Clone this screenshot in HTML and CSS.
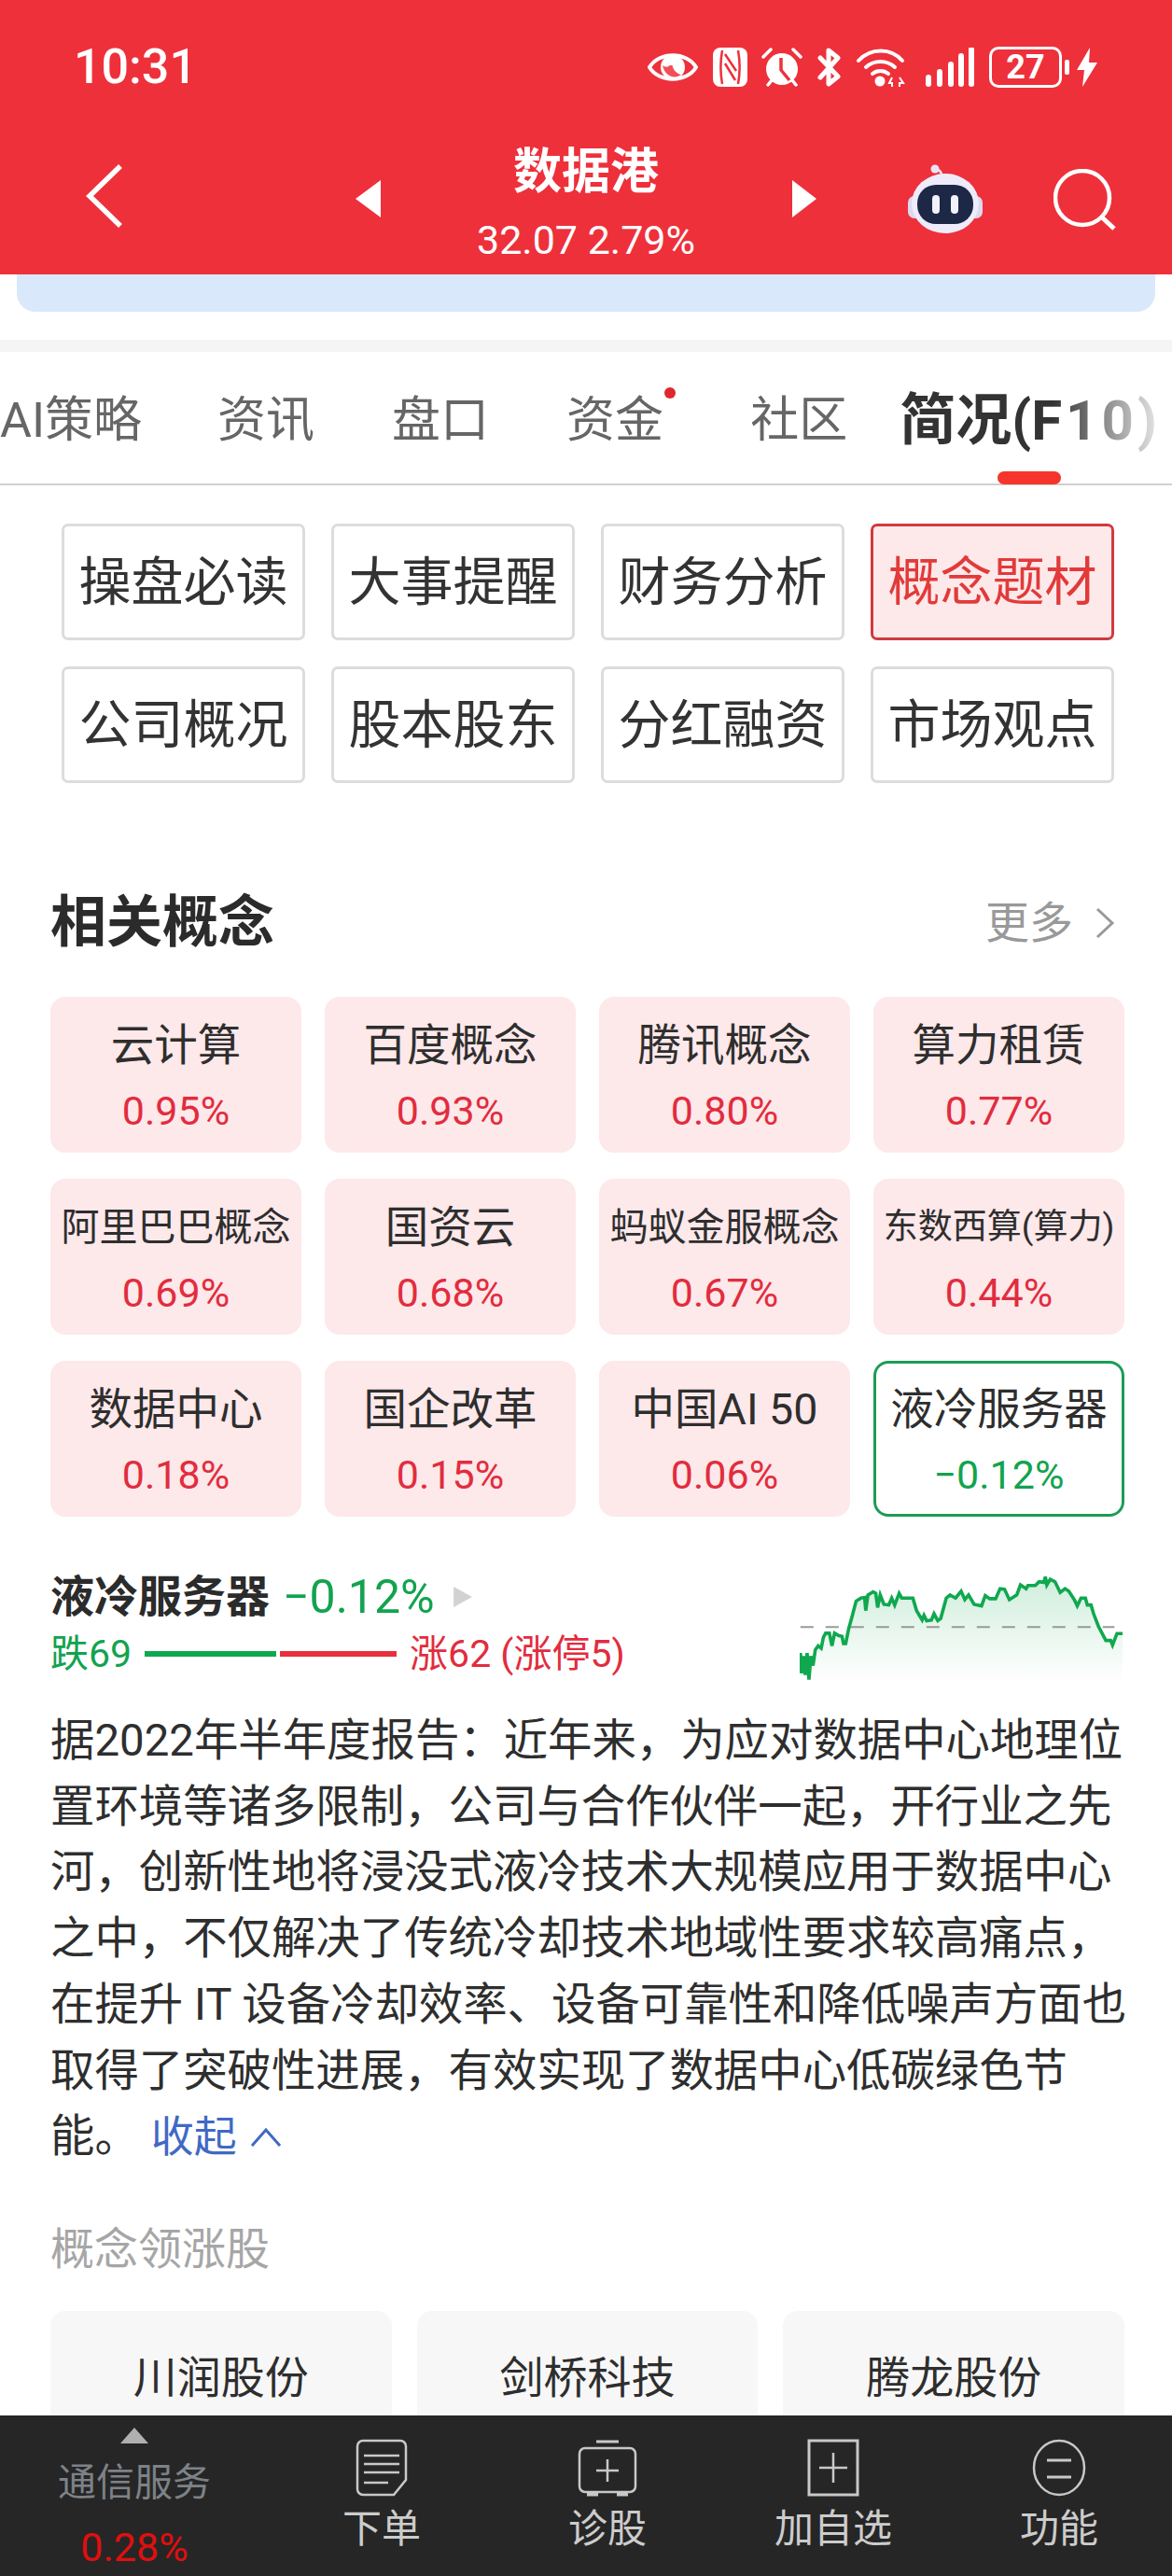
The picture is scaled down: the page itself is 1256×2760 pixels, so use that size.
FILE: index.html
```html
<!DOCTYPE html>
<html lang="zh">
<head>
<meta charset="utf-8">
<title>数据港</title>
<link rel="stylesheet" href="styles.css">
</head>
<body>
<main class="page">
  <header class="appbar">
    <div class="status">
      <span class="time">10:31</span>
      <div class="status-icons">
        <svg class="i-eye" viewBox="0 0 54 42"><path d="M2 21C12 4 42 4 52 21C42 38 12 38 2 21Z" fill="none" stroke="#fff" stroke-width="4"/><circle cx="27" cy="21" r="13" fill="#fff"/><path d="M16 19c4 3 8 2 10-4 0 8 5 13 10 14-6 5-17 3-20-10Z" fill="#ee303b" opacity=".85"/><circle cx="25" cy="16" r="3" fill="#fff"/></svg>
        <svg class="i-nfc" viewBox="0 0 37 42"><rect width="37" height="42" rx="8" fill="#fff"/><path d="M10 3C8 14 8 28 10 39M27 3c2 11 2 25 0 36" stroke="#ee303b" stroke-width="2.5" fill="none"/><path d="M13 7l12 18M13 17l11 18" stroke="#ee303b" stroke-width="2.5" fill="none"/></svg>
        <svg class="i-alarm" viewBox="0 0 44 42"><circle cx="22" cy="23" r="17" fill="#fff"/><path d="M21 11v13l9 11" stroke="#ee303b" stroke-width="3.5" fill="none"/><path d="M2 10 10 2M42 10 34 2M7 40l4-5M37 40l-4-5" stroke="#fff" stroke-width="3.5" stroke-linecap="round"/></svg>
        <svg class="i-bt" viewBox="0 0 27 42"><path d="M4 11 23 31 13 39V3l10 8L4 32" fill="none" stroke="#fff" stroke-width="5" stroke-linejoin="round" stroke-linecap="round"/></svg>
        <svg class="i-wifi" viewBox="0 0 53 42"><path d="M3 14C16 0 38 0 50 14M11 21c9-8 22-8 31 0M18 28c5-4 12-4 17 0" fill="none" stroke="#fff" stroke-width="4" stroke-linecap="round"/><circle cx="26" cy="36" r="5.5" fill="#fff"/><path d="M39 32l-3 6h3v4M47 42v-4l4 0-4-6" fill="none" stroke="#fff" stroke-width="2"/></svg>
        <svg class="i-signal" viewBox="0 0 52 42"><path d="M3 32v7M15 26v13M27 18v21M38 9v30M49 2v37" stroke="#fff" stroke-width="6" stroke-linecap="round"/></svg>
        <span class="battery">27</span>
        <span class="battery-nub"></span>
        <svg class="i-bolt" viewBox="0 0 22 42"><path d="M14 0 0 24h8L6 42l16-26h-9Z" fill="#fff"/></svg>
      </div>
    </div>
    <nav class="nav">
      <svg class="i-back" viewBox="0 0 41 70"><path d="M38 3 5 35l33 32" fill="none" stroke="#fff" stroke-width="5.5"/></svg>
      <svg class="i-prev" viewBox="0 0 27 40"><path d="M27 0v40L0 20Z" fill="#fff"/></svg>
      <div class="stock">
        <div class="stock-name">数据港</div>
        <div class="stock-price">32.07 2.79%</div>
      </div>
      <svg class="i-next" viewBox="0 0 26 40"><path d="M0 0v40l26-20Z" fill="#fff"/></svg>
      <svg class="i-robot" viewBox="0 0 80 74"><path d="M30 5c3 1 6 2 7 9" fill="none" stroke="#e8e4f6" stroke-width="2.5"/><circle cx="29" cy="5" r="4.5" fill="#e8e4f6"/><rect x="0" y="34" width="80" height="24" rx="7" fill="#dcd8f0"/><ellipse cx="40" cy="42" rx="36" ry="32" fill="#eeecfa"/><rect x="10" y="22" width="60" height="42" rx="20" fill="#1c2846"/><rect x="26" y="33" width="8" height="20" rx="4" fill="#f2f2fa"/><rect x="46" y="33" width="8" height="20" rx="4" fill="#f2f2fa"/></svg>
      <svg class="i-search" viewBox="0 0 67 66"><circle cx="31" cy="31" r="29" fill="none" stroke="#fff" stroke-width="4.5"/><path d="M51 51 65 64" stroke="#fff" stroke-width="5"/></svg>
    </nav>
  </header>

  <div class="notice"></div>
  <div class="band"></div>

  <div class="tabs">
    <span class="tab">AI策略</span>
    <span class="tab tab-gap-a">资讯</span>
    <span class="tab tab-gap-b">盘口</span>
    <span class="tab tab-gap-b tab-dot">资金</span>
    <span class="tab tab-gap-c">社区</span>
    <span class="tab tab-active">简况(<span class="tab-latin">F10)</span></span>
  </div>

  <div class="buttons">
    <span class="btn">操盘必读</span>
    <span class="btn">大事提醒</span>
    <span class="btn">财务分析</span>
    <span class="btn btn-on">概念题材</span>
    <span class="btn">公司概况</span>
    <span class="btn">股本股东</span>
    <span class="btn">分红融资</span>
    <span class="btn">市场观点</span>
  </div>

  <section class="concepts">
    <div class="sec-head">
      <h2 class="sec-title">相关概念</h2>
      <span class="sec-more">更多<svg class="i-chev" viewBox="0 0 23 36"><path d="M3 3l16 15L3 33" fill="none" stroke="#999" stroke-width="3"/></svg></span>
    </div>
    <div class="cards">
      <div class="card"><div class="c-name">云计算</div><div class="c-pct">0.95%</div></div>
      <div class="card"><div class="c-name">百度概念</div><div class="c-pct">0.93%</div></div>
      <div class="card"><div class="c-name">腾讯概念</div><div class="c-pct">0.80%</div></div>
      <div class="card"><div class="c-name">算力租赁</div><div class="c-pct">0.77%</div></div>
      <div class="card"><div class="c-name c-sm">阿里巴巴概念</div><div class="c-pct">0.69%</div></div>
      <div class="card"><div class="c-name">国资云</div><div class="c-pct">0.68%</div></div>
      <div class="card"><div class="c-name c-sm">蚂蚁金服概念</div><div class="c-pct">0.67%</div></div>
      <div class="card"><div class="c-name c-xs">东数西算(算力)</div><div class="c-pct">0.44%</div></div>
      <div class="card"><div class="c-name">数据中心</div><div class="c-pct">0.18%</div></div>
      <div class="card"><div class="c-name">国企改革</div><div class="c-pct">0.15%</div></div>
      <div class="card"><div class="c-name">中国AI 50</div><div class="c-pct">0.06%</div></div>
      <div class="card card-sel"><div class="c-name">液冷服务器</div><div class="c-pct">−0.12%</div></div>
    </div>

    <div class="detail">
      <div class="detail-left">
        <div class="d-head">
          <span class="d-name">液冷服务器</span>
          <span class="d-pct">−0.12%</span>
          <svg class="i-tri" viewBox="0 0 18 20"><path d="M0 0v20l18-10Z" fill="#d2d2d2"/></svg>
        </div>
        <div class="d-breadth">
          <span class="d-down">跌69</span>
          <span class="bar-down"></span>
          <span class="bar-up"></span>
          <span class="d-up">涨62 (涨停5)</span>
        </div>
      </div>
      <svg class="spark" viewBox="570 85 875 345" preserveAspectRatio="none">
        <defs>
          <linearGradient id="sparkfill" x1="0" y1="0" x2="0" y2="1">
            <stop offset="0" stop-color="#0fa84f" stop-opacity=".2"/>
            <stop offset="1" stop-color="#0fa84f" stop-opacity="0"/>
          </linearGradient>
        </defs>
        <path fill="url(#sparkfill)" d="M572 335 575 400 580 345 585 405 590 335 595 420 600 345 606 375 612 325 620 312 628 320 634 285 640 272 650 272 657 312 664 272 676 280 684 282 688 305 694 305 702 258 712 215 722 170 735 160 745 158 748 200 754 150 768 140 775 145 780 190 787 150 797 180 810 182 818 160 826 182 838 145 845 160 875 160 885 200 900 230 905 215 912 232 925 230 932 210 942 232 950 225 965 160 975 150 990 160 1005 138 1015 165 1025 150 1040 180 1060 185 1070 152 1082 162 1098 162 1110 130 1122 132 1135 165 1155 150 1165 118 1180 130 1185 120 1205 120 1215 108 1228 110 1232 92 1236 118 1245 100 1258 108 1272 142 1285 130 1295 138 1310 165 1318 185 1328 160 1340 160 1345 182 1355 182 1362 210 1375 250 1395 295 1408 295 1413 310 1425 273 1440 273V428H572Z"/>
        <path class="spark-base" d="M572 252H1418"/>
        <path class="spark-line" d="M572 335 575 400 580 345 585 405 590 335 595 420 600 345 606 375 612 325 620 312 628 320 634 285 640 272 650 272 657 312 664 272 676 280 684 282 688 305 694 305 702 258 712 215 722 170 735 160 745 158 748 200 754 150 768 140 775 145 780 190 787 150 797 180 810 182 818 160 826 182 838 145 845 160 875 160 885 200 900 230 905 215 912 232 925 230 932 210 942 232 950 225 965 160 975 150 990 160 1005 138 1015 165 1025 150 1040 180 1060 185 1070 152 1082 162 1098 162 1110 130 1122 132 1135 165 1155 150 1165 118 1180 130 1185 120 1205 120 1215 108 1228 110 1232 92 1236 118 1245 100 1258 108 1272 142 1285 130 1295 138 1310 165 1318 185 1328 160 1340 160 1345 182 1355 182 1362 210 1375 250 1395 295 1408 295 1413 310 1425 273 1440 273"/>
      </svg>
    </div>

    <div class="para">
      <span class="ln">据2022年半年度报告：近年来，为应对数据中心地理位</span>
      <span class="ln">置环境等诸多限制，公司与合作伙伴一起，开行业之先</span>
      <span class="ln">河，创新性地将浸没式液冷技术大规模应用于数据中心</span>
      <span class="ln">之中，不仅解决了传统冷却技术地域性要求较高痛点，</span>
      <span class="ln">在提升 IT 设备冷却效率、设备可靠性和降低噪声方面也</span>
      <span class="ln">取得了突破性进展，有效实现了数据中心低碳绿色节</span>
      <span class="ln">能。<a class="fold">收起<svg class="i-fold" viewBox="0 0 34 22"><path d="M2 20 17 3l15 17" fill="none" stroke="#4169c4" stroke-width="3"/></svg></a></span>
    </div>

    <div class="lead-title">概念领涨股</div>
    <div class="leads">
      <div class="lead">川润股份</div>
      <div class="lead">剑桥科技</div>
      <div class="lead">腾龙股份</div>
    </div>
  </section>
</main>

<footer class="bottom">
  <div class="b-item b-first">
    <svg class="i-up" viewBox="0 0 30 17"><path d="M15 0 30 17H0Z" fill="#b0b0b0"/></svg>
    <span class="b-sector">通信服务</span>
    <span class="b-pct">0.28%</span>
  </div>
  <div class="b-item">
    <svg class="b-ico" viewBox="0 0 56 62"><path d="M8 2h40a6 6 0 0 1 6 6v36L41 60H8a6 6 0 0 1-6-6V8a6 6 0 0 1 6-6Z" fill="none" stroke="#c8c8c8" stroke-width="2.5"/><path d="M9 18h38M9 27h38M9 36h38M9 47h26" stroke="#c8c8c8" stroke-width="2.5"/></svg>
    <span class="b-label">下单</span>
  </div>
  <div class="b-item">
    <svg class="b-ico" viewBox="0 0 64 62"><path d="M20 3h24" stroke="#c8c8c8" stroke-width="3"/><rect x="2" y="10" width="60" height="47" rx="6" fill="none" stroke="#c8c8c8" stroke-width="2.5"/><path d="M10 59h12M42 59h12" stroke="#c8c8c8" stroke-width="5"/><path d="M32 22v24M20 34h24" stroke="#c8c8c8" stroke-width="2.5"/></svg>
    <span class="b-label">诊股</span>
  </div>
  <div class="b-item">
    <svg class="b-ico" viewBox="0 0 56 62"><rect x="2" y="2" width="52" height="58" fill="none" stroke="#c8c8c8" stroke-width="3"/><path d="M28 15v32M13 31h30" stroke="#c8c8c8" stroke-width="2.5"/></svg>
    <span class="b-label">加自选</span>
  </div>
  <div class="b-item">
    <svg class="b-ico" viewBox="0 0 58 62"><ellipse cx="29" cy="31" rx="27" ry="29" fill="none" stroke="#c8c8c8" stroke-width="2.5"/><path d="M16 23h26M16 41h26" stroke="#c8c8c8" stroke-width="3"/></svg>
    <span class="b-label">功能</span>
  </div>
</footer>
</body>
</html>
```

FILE: styles.css
```css
* { box-sizing: border-box; }
html, body { margin: 0; padding: 0; }
body {
  width: 1256px;
  height: 2760px;
  display: flex;
  flex-direction: column;
  overflow: hidden;
  background: #fff;
  color: #2e2e2e;
  font-family: Roboto, "Noto Sans CJK SC", sans-serif;
}
.page { flex: 1; min-height: 0; overflow: hidden; }

/* header */
.appbar { height: 294px; background: #ee303b; color: #fff; }
.status { height: 144px; display: flex; align-items: center; justify-content: space-between; padding: 0 80px 0 79px; }
.time { font-size: 52px; font-weight: 500; line-height: 1; }
.status-icons { display: flex; align-items: center; }
.status-icons svg { display: block; height: 42px; }
.i-eye { width: 54px; }
.i-nfc { width: 37px; margin-left: 16px; }
.i-alarm { width: 44px; margin-left: 15px; }
.i-bt { width: 27px; margin-left: 15px; }
.i-wifi { width: 53px; margin-left: 15px; }
.i-signal { width: 52px; margin-left: 22px; }
.battery { width: 78px; height: 44px; margin-left: 16px; border: 3px solid #fff; border-radius: 10px; font-size: 36px; font-weight: 700; line-height: 38px; text-align: center; }
.battery-nub { width: 5px; height: 16px; margin-left: 3px; background: #fff; border-radius: 2px; }
.i-bolt { width: 22px; margin-left: 8px; }

.nav { height: 150px; display: flex; align-items: center; padding: 0 0 18px 91px; }
.i-back { width: 41px; height: 70px; }
.i-prev { width: 27px; height: 40px; margin: 6px 0 0 249px; }
.stock { width: 440px; align-self: flex-start; margin-top: 5px; text-align: center; }
.stock-name { font-size: 52px; font-weight: 700; line-height: 71px; }
.stock-price { font-size: 43px; font-weight: 400; line-height: 74px; }
.i-next { width: 26px; height: 40px; margin: 6px 0 0 1px; }
.i-robot { width: 80px; height: 74px; margin: 5px 0 0 98px; }
.i-search { width: 67px; height: 66px; margin: 7px 0 0 76px; }

.notice { height: 40px; margin: 0 18px; background: #d9e8fb; border-radius: 0 0 20px 20px; }
.band { height: 13px; margin-top: 30px; background: #f5f5f5; }

/* tabs */
.tabs { position: relative; height: 143px; display: flex; align-items: center; border-bottom: 2px solid #d0d0d0; padding-top: 6px; }
.tab { font-size: 52px; line-height: 70px; color: #666; white-space: nowrap; }
.tab-gap-a { margin-left: 81px; }
.tab-gap-b { margin-left: 83px; }
.tab-gap-c { margin-left: 93px; }
.tab-dot { position: relative; }
.tab-dot::after { content: ""; position: absolute; right: -13px; top: -1px; width: 12px; height: 12px; border-radius: 50%; background: #e0262f; }
.tab-active { position: relative; margin-left: 56px; font-size: 60px; font-weight: 700; color: #333; }
.tab-latin { letter-spacing: 4px; }
.tab-active::before { content: ""; position: absolute; left: 105px; bottom: -33px; width: 68px; height: 14px; border-radius: 7px; background: #f5352c; }
.tabs::after { content: ""; position: absolute; right: 18px; top: 30px; width: 110px; height: 90px; background: linear-gradient(to right, rgba(255,255,255,0), rgba(255,255,255,.85)); }

/* buttons */
.buttons { display: grid; grid-template-columns: repeat(4, 261px); gap: 28px 28px; padding: 41px 0 0 66px; }
.btn { height: 125px; border: 3px solid #dcdcdc; border-radius: 7px; font-size: 56px; line-height: 109px; text-align: center; color: #333; font-family: "Noto Sans CJK SC", sans-serif; }
.btn-on { border-color: #d03a3f; background: #fde9ea; color: #e23a3a; }

/* concepts */
.concepts { padding: 0 51px 0 54px; }
.sec-head { height: 60px; margin-top: 120px; display: flex; align-items: center; justify-content: space-between; }
.sec-title { margin: 0; font-size: 60px; font-weight: 700; line-height: 60px; color: #2b2b2b; }
.sec-more { display: flex; align-items: center; margin-right: 9px; font-size: 47px; line-height: 60px; color: #999; }
.i-chev { width: 23px; height: 36px; margin-left: 23px; }

.cards { display: grid; grid-template-columns: repeat(4, 1fr); gap: 28px 25px; margin-top: 49px; }
.card { height: 167px; padding-top: 22px; background: #fde8ea; border-radius: 16px; text-align: center; }
.card-sel { padding-top: 19px; background: #fff; border: 3px solid #1c9c58; }
.c-name { font-size: 46.5px; line-height: 60px; color: #2e2e2e; white-space: nowrap; }
.c-sm { font-size: 41px; }
.c-xs { font-size: 37px; }
.c-pct { margin-top: 10px; font-size: 43px; line-height: 60px; color: #e22c3e; }
.card-sel .c-pct { color: #12a34f; }

.detail { display: flex; justify-content: space-between; height: 120px; margin-top: 58px; }
.d-head { display: flex; align-items: center; height: 56px; }
.d-name { font-size: 47px; font-weight: 700; line-height: 56px; color: #2b2b2b; }
.d-pct { margin-left: 14px; font-size: 50px; line-height: 56px; color: #12a34f; }
.i-tri { width: 20px; height: 22px; margin-left: 20px; }
.d-breadth { display: flex; align-items: center; height: 56px; margin-top: 5px; font-size: 41px; line-height: 56px; white-space: nowrap; }
.d-down { color: #12a34f; }
.bar-down { width: 141px; height: 6px; margin-left: 14px; background: #0fa84f; }
.bar-up { width: 125px; height: 6px; margin-left: 4px; background: #e8303f; }
.d-up { margin-left: 14px; color: #e22c3e; }
.spark { width: 348px; height: 116px; margin-top: 4px; }
.spark-line { fill: none; stroke: #0fa84f; stroke-width: 3.6; vector-effect: non-scaling-stroke; }
.spark-base { fill: none; stroke: #999; stroke-width: 2; stroke-dasharray: 14 13; vector-effect: non-scaling-stroke; }

.para { margin-top: 27px; font-size: 47.4px; line-height: 70.7px; color: #2e2e2e; white-space: nowrap; }
.ln { display: block; }
.fold { margin-left: 13px; font-size: 46px; color: #4169c4; }
.i-fold { width: 34px; height: 22px; margin-left: 14px; vertical-align: 4px; }

.lead-title { margin-top: 55px; font-size: 47px; line-height: 60px; color: #a6a6a6; }
.leads { display: grid; grid-template-columns: repeat(3, 1fr); gap: 27px; margin-top: 36px; }
.lead { height: 190px; padding-top: 38px; background: #f7f7f7; border-radius: 16px; font-size: 47px; line-height: 68px; text-align: center; color: #2e2e2e; }

/* bottom bar */
.bottom { flex: none; height: 172px; display: grid; grid-template-columns: 288px repeat(4, 242px); background: #262626; }
.b-item { display: flex; flex-direction: column; align-items: center; padding-top: 25px; }
.b-ico { display: block; height: 62px; width: auto; }
.b-label { margin-top: 5px; font-size: 42px; line-height: 60px; color: #ccc; }
.b-first { padding-top: 13px; }
.i-up { width: 30px; height: 17px; }
.b-sector { margin-top: 12px; font-size: 41px; line-height: 60px; color: #7d8287; }
.b-pct { margin-top: 9px; font-size: 43px; line-height: 60px; color: #e00f0f; }
```
